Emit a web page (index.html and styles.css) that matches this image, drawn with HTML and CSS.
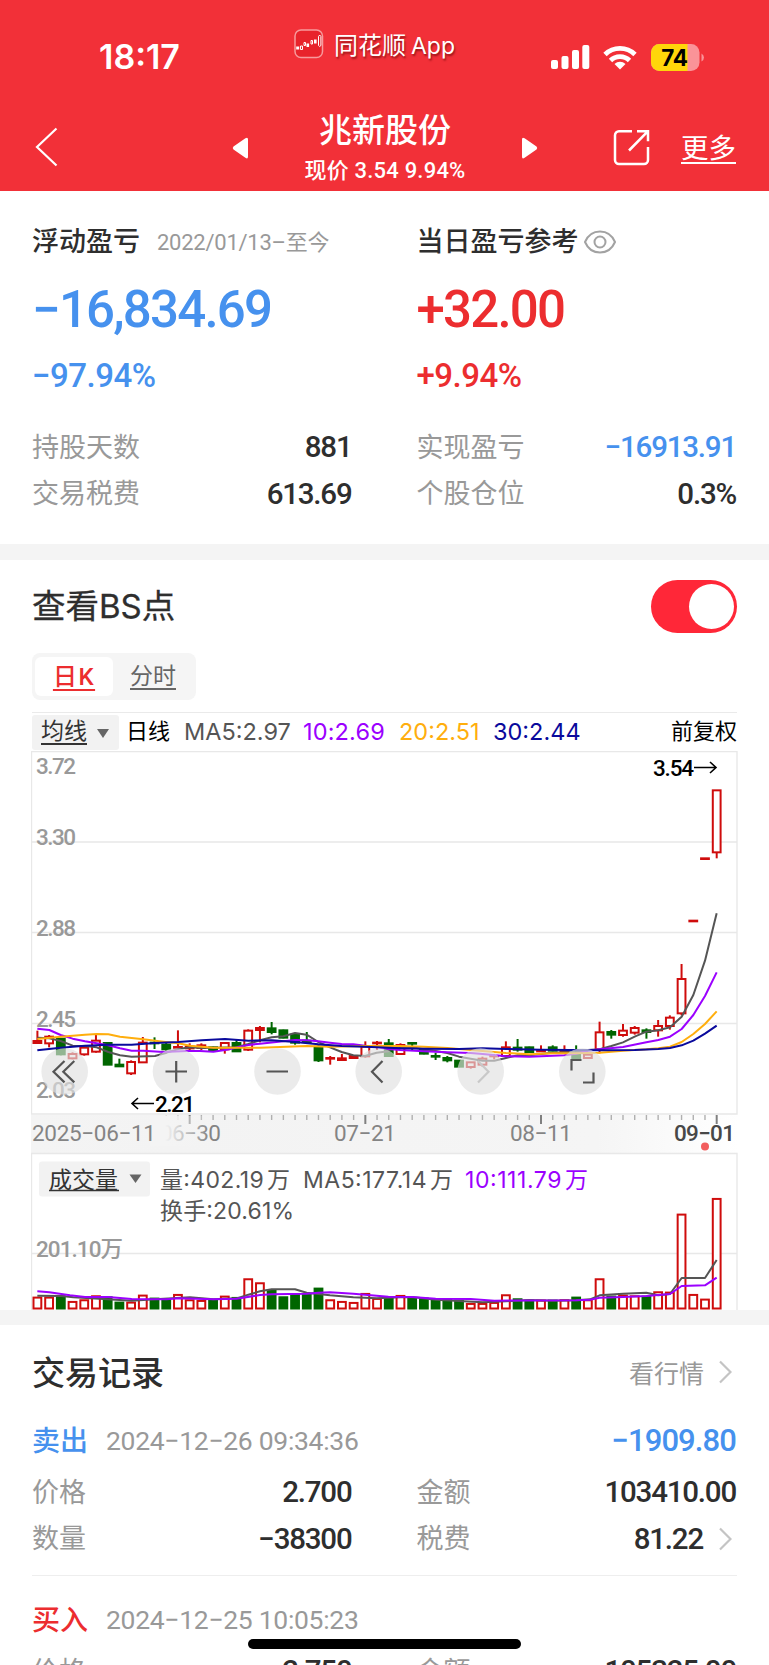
FILE: index.html
```html
<!DOCTYPE html>
<html lang="zh-CN">
<head>
<meta charset="utf-8">
<title>兆新股份</title>
<link rel="stylesheet" href="styles.css">
</head>
<body>
<div class="screen">
  <header class="top">
    <div class="status">
      <span class="clock">18:17</span>
      <span class="source">
        <svg width="30" height="30" viewBox="0 0 30 30"><rect x="1" y="1" width="27.500" height="27.500" rx="6" fill="#e8232b" stroke="#f79a9c" stroke-width="1.500"/><path d="M2.200 17.500h3v3h-3zM12.500 14.500h2.600v3.500h-2.600zM20 10.500h2.600v4h-2.600z" fill="#fff"/><path d="M6.500 17h2v3.500h-2zM10 13.500h1.500v3h-1.500zM17 11.500h1.500v3.500h-1.500zM24.500 7.500q1.200-3 2.400 0v9q-1.200 2-2.400 0z" fill="none" stroke="#fff"/></svg>
        <span class="source-name">同花顺<span class="latin">App</span></span>
      </span>
      <span class="radios">
        <svg width="150" height="28" viewBox="551 44 150 28">
          <g fill="#fff"><rect x="551" y="60" width="7" height="9" rx="2"/><rect x="561.500" y="56" width="7" height="13" rx="2"/><rect x="572" y="50" width="7" height="19" rx="2"/><rect x="582.300" y="45" width="7" height="24" rx="2"/></g>
          <g fill="none" stroke="#fff" stroke-width="4.800"><path d="M605 54.500a21.500 21.500 0 0 1 30 0"/><path d="M610.500 60.500a13.500 13.500 0 0 1 19 0"/></g>
          <path d="M620 69.500l-5.500-5.500a8 8 0 0 1 11 0z" fill="#fff"/>
          <rect x="651" y="44" width="48.500" height="27" rx="8.500" fill="#fa9398"/>
          <path d="M659.500 44h28v27h-28a8.500 8.500 0 0 1-8.500-8.500v-10a8.500 8.500 0 0 1 8.500-8.500z" fill="#ffd60a"/>
          <path d="M701.500 53.500a4.500 4.500 0 0 1 0 8z" fill="#fa9398"/>
          <text x="674.500" y="65.500" class="battery">74</text>
        </svg>
      </span>
    </div>
    <nav class="nav">
      <svg class="back" width="24" height="40" viewBox="0 0 24 40"><path d="M21.500 1.500L2 20l19.500 18.500" fill="none" stroke="#fff" stroke-width="2.200"/></svg>
      <svg class="prev" width="17" height="24" viewBox="0 0 17 24"><path d="M16 3.500v17q0 3-2.600 1.200L1.500 13.500q-1.500-1.500 0-3L13.400 2.300Q16 .5 16 3.500z" fill="#fff"/></svg>
      <div class="stock"><h1>兆新股份</h1><p>现价 3.54 9.94%</p></div>
      <svg class="next" width="17" height="24" viewBox="0 0 17 24"><path d="M1 3.500v17q0 3 2.600 1.200L15.500 13.500q1.500-1.500 0-3L3.600 2.300Q1 .5 1 3.500z" fill="#fff"/></svg>
      <svg class="share" width="38" height="38" viewBox="0 0 38 38"><path d="M19 2.200H6a4 4 0 0 0-4 4V31a4 4 0 0 0 4 4h25a4 4 0 0 0 4-4V18M24 2.200H35v10M35 2.200L16 21.500" fill="none" stroke="#fff" stroke-width="2.500"/></svg>
      <a class="more">更多</a>
    </nav>
  </header>

  <section class="summary">
    <div class="col">
      <div class="head"><h2>浮动盈亏</h2><span class="range">2022/01/13–至今</span></div>
      <div class="big blue">−16,834.69</div>
      <div class="pct blue">−97.94%</div>
      <div class="row"><span>持股天数</span><b>881</b></div>
      <div class="row"><span>交易税费</span><b>613.69</b></div>
    </div>
    <div class="col">
      <div class="head"><h2>当日盈亏参考</h2><svg class="eye" width="34" height="26" viewBox="0 0 34 26" fill="none" stroke="#a2a2a2" stroke-width="2"><path d="M2 13C8 -1 26 -1 32 13C26 27 8 27 2 13z"/><circle cx="17" cy="13" r="5.500"/></svg></div>
      <div class="big red">+32.00</div>
      <div class="pct red">+9.94%</div>
      <div class="row"><span>实现盈亏</span><b class="blue">−16913.91</b></div>
      <div class="row"><span>个股仓位</span><b>0.3%</b></div>
    </div>
  </section>

  <section class="bs">
    <div class="bs-head"><h2>查看<span class="latin">BS</span>点</h2><span class="toggle"><i></i></span></div>
    <div class="tabs"><span class="tab on">日K</span><span class="tab">分时</span></div>
    <div class="legend">
      <span class="pick">均线</span>
      <span class="l-name">日线</span><span class="l-5">MA5:2.97</span><span class="l-10">10:2.69</span><span class="l-20">20:2.51</span><span class="l-30">30:2.44</span>
      <span class="adj">前复权</span>
    </div>
    <svg class="chart" width="707" height="560" viewBox="31 751 707 560">
      <defs>
        <linearGradient id="axis" x1="0" y1="0" x2="1" y2="0"><stop offset="0" stop-color="#f4f4f4"/><stop offset=".2" stop-color="#f3f3f3"/><stop offset=".8" stop-color="#f5f5f5"/><stop offset="1" stop-color="#fff"/></linearGradient>
        <linearGradient id="fade" x1="0" y1="0" x2="1" y2="0"><stop offset="0" stop-color="#f4f4f4"/><stop offset=".25" stop-color="#f4f4f4"/><stop offset="1" stop-color="#f4f4f4" stop-opacity="0"/></linearGradient>
      </defs>
      <rect x="31" y="1115" width="707" height="38" fill="url(#axis)"/>
      <path class="grid" d="M31 751.500H737V1114H31.500V751.500M31.500 842H737M31.500 932.500H737M31.500 1023.500H737M31.500 1310V1153.500H737V1310M31.500 1253.500H737"/>
      <g class="scale">
        <text x="36" y="773.500" textLength="40">3.72</text>
        <text x="36" y="845" textLength="40">3.30</text>
        <text x="36" y="935.500" textLength="40">2.88</text>
        <text x="36" y="1026.500" textLength="40">2.45</text>
        <text x="36" y="1098" textLength="40">2.03</text>
        <text x="36" y="1256.500" textLength="87">201.10万</text>
      </g>
      <g id="ticks"></g>
      <g class="dates">
        <text x="160" y="1141" textLength="61">06−30</text>
        <rect x="150" y="1116" width="60" height="30" fill="url(#fade)"/>
        <text x="32" y="1141" textLength="124">2025−06−11</text>
        <text x="334" y="1141" textLength="62">07−21</text>
        <text x="510" y="1141" textLength="62">08−11</text>
        <text x="674" y="1141" textLength="61" class="today">09−01</text>
      </g>
      <g id="candles"></g>
      <g id="volumes"></g>
      <g id="lines"></g>
      <g class="mark">
        <text x="653" y="776" textLength="41">3.54</text><path d="M694 767.500h22M710 762l6 5.500-6 5.500"/>
        <text x="155" y="1112" textLength="40">2.21</text><path d="M154 1103.500h-22M138 1098l-6 5.500 6 5.500"/>
      </g>
      <circle cx="705" cy="1146.500" r="4" fill="#f25d5d"/>
      <g class="btns">
        <circle cx="64.700" cy="1071.500" r="23.300"/><circle cx="176" cy="1071.500" r="23.300"/><circle cx="277.500" cy="1071.500" r="23.300"/><circle cx="378.700" cy="1071.500" r="23.300"/><circle cx="480.700" cy="1071.500" r="23.300"/><circle cx="582.300" cy="1071.500" r="23.300"/>
      </g>
      <g class="glyphs">
        <path d="M64.500 1061L53.500 1071.700l11 10.700M74.300 1061L63.300 1071.700l11 10.700M165.500 1071.500h21.500M176.200 1061v21.500M266.500 1071.500h21.500M382.500 1061L372 1071.700l10.500 10.700M571.500 1070.500v-10.500h10M593.500 1072.500v10h-10.500"/>
        <path class="off" d="M478 1061L488.500 1071.700l-10.500 10.700"/>
      </g>
      <rect x="39" y="1161.500" width="111" height="35" rx="3" fill="#f2f2f2"/>
      <text x="49" y="1188" class="voltxt dark" textLength="69">成交量</text><path d="M49 1190.500h70" stroke="#333" stroke-width="1.500"/>
      <path d="M129.500 1174.500h12l-6 8.500z" fill="#666"/>
      <g class="voltxt">
        <text x="160" y="1188" textLength="130">量:402.19<tspan dx="3">万</tspan></text>
        <text x="303" y="1188" textLength="150">MA5:177.14<tspan dx="3">万</tspan></text>
        <text x="465" y="1188" textLength="123" fill="#9b00ff">10:111.79<tspan dx="3">万</tspan></text>
        <text x="160" y="1219" textLength="134">换手:20.61%</text>
      </g>
    </svg>
  </section>

  <section class="records">
    <div class="rec-title"><h2>交易记录</h2><span class="quote">看行情</span><svg class="chev" width="14" height="24" viewBox="0 0 14 24"><path d="M2 1.500l10.500 10.500L2 22.500"/></svg></div>
    <article class="rec">
      <div class="rec-head"><strong class="blue">卖出</strong><time>2024−12−26 09:34:36</time><b class="blue">−1909.80</b></div>
      <div class="pair"><div class="row"><span>价格</span><b>2.700</b></div><div class="row"><span>金额</span><b>103410.00</b></div></div>
      <div class="pair"><div class="row"><span>数量</span><b>−38300</b></div><div class="row"><span>税费</span><b>81.22</b><svg class="chev" width="14" height="24" viewBox="0 0 14 24"><path d="M2 1.500l10.500 10.500L2 22.500"/></svg></div></div>
    </article>
    <article class="rec second">
      <div class="rec-head"><strong class="red">买入</strong><time>2024−12−25 10:05:23</time></div>
      <div class="pair"><div class="row"><span>价格</span><b>2.750</b></div><div class="row"><span>金额</span><b>105325.00</b></div></div>
    </article>
  </section>
  <div class="home-bar"></div>
</div>
<script src="chart.js"></script>
</body>
</html>
```
FILE: styles.css
```css
* { box-sizing: border-box; }
body { margin: 0; background: #fff; color: #2e2e2e; font-family: Roboto, "Noto Sans CJK SC", sans-serif; }
h1, h2, p { margin: 0; font-weight: 500; }
.latin { font-family: Inter, sans-serif; }
.blue { color: #4691ee !important; }
.red { color: #ec2d2f !important; }
.screen { position: relative; width: 769px; height: 1665px; overflow: hidden; }

.top { height: 191px; background: #f23038; color: #fff; }
.status { display: flex; height: 104px; }
.clock { width: 195px; margin-left: 99px; padding-top: 37px; font: 600 34px/40px Inter, sans-serif; letter-spacing: 0; }
.source { display: flex; align-items: center; gap: 10px; width: 257px; height: 30px; margin-top: 29px; font-size: 24px; white-space: nowrap; text-shadow: 1px 2px 2px rgba(90,0,0,.6); }
.source-name { position: relative; top: -1px; }
.source .latin { font-size: 23px; margin-left: 5px; }
.radios { padding-top: 44px; height: 80px; }
.radios svg { display: block; overflow: visible; }
.battery { font: 700 22.500px Inter, sans-serif; text-anchor: middle; letter-spacing: -.3px; fill: #000; }
.nav { display: flex; height: 87px; }
.nav svg { flex: none; }
.back { margin: 23px 0 0 35px; }
.prev { margin: 32px 0 0 173px; }
.stock { width: 272px; text-align: center; padding-top: 4px; }
.stock h1 { font-size: 33px; line-height: 46px; }
.stock p { font-size: 22px; line-height: 33px; letter-spacing: .2px; }
.next { margin: 32px 0 0 0; }
.share { margin: 25px 0 0 75px; }
.more { margin: 25px 0 0 30px; font-size: 27.500px; line-height: 40px; text-decoration: underline; text-decoration-thickness: 2px; text-underline-offset: 4px; }

.summary { display: flex; gap: 64px; height: 353px; padding: 31px 32px 0; }
.col { flex: 1; }
.head { display: flex; align-items: center; height: 40px; }
.head h2 { font-size: 27px; line-height: 40px; }
.range { margin: -5px 0 0 17px; font-size: 22px; color: #999; letter-spacing: -.25px; white-space: nowrap; }
.eye { margin-left: 4px; }
.big { margin-top: 18px; font-size: 51px; line-height: 60px; font-weight: 500; letter-spacing: -1.800px; }
.pct { margin-top: 16px; margin-bottom: 28px; font-size: 33px; line-height: 40px; font-weight: 500; letter-spacing: -.500px; }
.row { display: flex; align-items: center; height: 46.500px; font-size: 27px; color: #999; }
.row span { margin-top: -4px; }
.row b { margin-left: auto; padding-right: 1px; color: #2e2e2e; font-size: 29.500px; font-weight: 500; letter-spacing: -1.200px; }

.bs { border-top: 16px solid #f4f4f4; padding: 0 32px; height: 766px; }
.bs-head { display: flex; justify-content: space-between; align-items: center; padding-top: 20px; }
.bs-head h2 { font-size: 33.500px; line-height: 50px; font-weight: 400; -webkit-text-stroke: .3px; }
.bs-head .latin { font-size: 33px; }
.toggle { width: 86px; height: 53px; padding: 4px 3px; border-radius: 27px; background: #ff2738; display: flex; justify-content: flex-end; }
.toggle i { width: 45px; height: 45px; border-radius: 50%; background: #fff; }
.tabs { display: flex; width: 164px; height: 47px; margin-top: 20px; padding: 4px 3px; border-radius: 8px; background: #f5f5f5; }
.tab { width: 80px; border-radius: 6px; text-align: center; font-size: 23px; line-height: 40px; color: #666; text-decoration: underline; text-underline-offset: 4px; }
.tab.on { width: 78px; background: #fff; color: #ec2d2f; font-weight: 500; font-size: 24px; letter-spacing: 1.500px; }
.legend { display: flex; align-items: center; height: 39px; margin-top: 12px; border-top: 1px solid #eaeaea; font: 23.500px/35px Inter, "Noto Sans CJK SC", sans-serif; white-space: nowrap; }
.legend span { flex: none; margin-top: -2px; }
.legend .pick { position: relative; width: 87px; height: 35px; margin-top: 0; padding-left: 9px; background: #f2f2f2; border-radius: 3px; color: #333; font-size: 23px; line-height: 33px; text-decoration: underline; text-underline-offset: 4px; }
.pick::after { content: ""; position: absolute; left: 65px; top: 14px; border: 6px solid transparent; border-top: 9px solid #666; border-bottom: 0; }
.l-name { width: 58px; padding-left: 7px; color: #000; font-size: 22px; }
.adj { color: #000; }
.l-5 { width: 126px; padding-left: 7px; color: #555; }
.l-10 { width: 96px; color: #9b00ff; letter-spacing: .15px; }
.l-20 { width: 94px; color: #ffae0d; }
.l-30 { color: #0a0a9c; }
.legend .adj { margin-left: auto; font-size: 22px; }
.chart { display: block; margin-left: -1px; }
.grid { fill: none; stroke: #e8e8e8; stroke-width: 1.400; }
.scale text { fill: #999; font-size: 22.500px; font-weight: 500; }
.dates text { fill: #848484; font-size: 22.500px; font-weight: 400; }
.dates .today { fill: #484848; font-weight: 500; }
.tick { stroke: #b0b0b0; stroke-width: 1.400; }
.tick.long { stroke: #808080; stroke-width: 2; }
.r { fill: #fff; stroke: #cf0c0c; stroke-width: 2; }
.g { fill: #060; stroke: #060; stroke-width: 2; }
.line { fill: none; stroke-width: 2; stroke-linejoin: round; }
.mark text { font-size: 22.500px; font-weight: 500; fill: #000; }
.mark path { fill: none; stroke: #000; stroke-width: 1.600; }
.btns circle { fill: rgba(225,225,225,.65); }
.glyphs path { fill: none; stroke: #555; stroke-width: 2.200; }
.glyphs .off { stroke: #c8c8c8; }
.voltxt, .voltxt text { font: 23px Inter, "Noto Sans CJK SC", sans-serif; }
.voltxt { fill: #555; }
.dark { fill: #333; }

.records { border-top: 15px solid #f4f4f4; }
.rec-title { display: flex; align-items: center; height: 94px; padding: 0 37px 0 32px; }
.rec-title h2 { font-size: 33px; margin-top: -3px; }
.quote { margin: -1px 0 0 auto; font-size: 25px; color: #999; }
.chev { margin-left: 14px; fill: none; stroke: #c4c4c4; stroke-width: 2.200; }
.rec { margin: 0 32px; }
.rec-head { display: flex; align-items: center; height: 42px; margin-bottom: 8px; }
.rec-head strong { width: 74px; margin-top: -2px; font-size: 28px; font-weight: 500; }
.rec-head time { font-size: 26.500px; color: #999; letter-spacing: -.300px; }
.rec-head b { margin-left: auto; padding-right: 1px; font-size: 31px; font-weight: 500; letter-spacing: -.900px; }
.pair { display: flex; gap: 64px; }
.pair .row { flex: 1; }
.rec .chev { margin-right: 5px; }
.second { border-top: 1px solid #eee; margin-top: 13px; padding-top: 22px; }
.home-bar { position: absolute; left: 248px; top: 1639px; width: 273px; height: 10px; border-radius: 5px; background: #000; }
```
FILE: chart.js
```js
// Candle: [colour, body top, body bottom, high, low], thirds of a pixel below BASE.
const BASE = 960, VOL = 1140, STEP = 11.712, X0 = 37.4;
const candles = [
["r",243,249,212,250],["r",230,250,225,262],["g",236,283,234,286],["r",282,295,277,298],["r",263,283,263,287],
["r",242,275,225,278],["g",249,314,249,314],["g",314,319,296,321],["r",306,340,301,345],["r",248,307,231,307],
["g",248,250,232,267],["g",254,268,247,272],["r",261,264,211,267],["r",260,265,250,270],["r",256,264,250,270],
["g",262,270,260,272],["r",249,268,246,281],["g",249,274,237,276],["r",212,269,208,273],["r",204,210,198,247],
["g",205,216,186,223],["g",211,233,209,235],["g",224,248,222,254],["g",242,246,216,250],["g",260,301,256,306],
["r",294,296,288,314],["r",295,300,282,301],["r",288,294,286,295],["r",260,289,244,293],["r",248,250,243,270],
["g",250,288,237,290],["r",255,282,250,283],["g",249,251,247,270],["g",267,281,265,283],["g",288,290,278,300],
["g",294,301,288,307],["g",302,320,300,322],["r",307,321,307,326],["r",296,314,290,320],["r",288,289,282,298],
["r",262,288,244,292],["g",263,269,237,275],["g",262,276,260,278],["r",272,274,256,275],["g",262,272,256,274],
["r",272,274,256,276],["g",277,296,256,298],["r",284,294,283,295],["r",217,268,185,280],["g",216,224,210,236],
["r",212,225,192,230],["r",204,218,198,224],["g",211,216,205,236],["r",198,211,180,230],["r",173,198,166,209],
["r",57,160,12,166],["r",-118,-116,-118,-116],["r",-305,-303,-305,-303],["r",-509,-323,-509,-305]];
const volumes = [471,471,467,484,479,467,470,486,486,465,474,478,463,479,481,478,468,472,416,428,450,470,462,463,444,479,484,487,460,475,472,466,475,474,480,476,480,490,490,487,464,476,480,480,480,479,471,479,416,468,465,467,468,455,456,222,463,477,175];
// Series: left part measured from x=20, right part from x=390.
const series = [
["#555",BASE,"52,233 88,235 122,243 158,257 195,258 230,262 265,276 300,286 335,290 405,288 440,278 475,267 510,262 545,264 650,262 685,252 720,241 755,232 790,229 825,219 860,224 895,246 930,262 965,276 1000,286 1035,288 1070,278 1105,274","0,268 31,264 66,262 101,268 137,273 172,279 207,290 242,296 278,302 313,302 348,294 383,286 418,286 453,282 488,278 523,277 559,276 594,270 629,268 664,258 699,247 734,230 769,215 805,211 840,202 875,170 910,105 945,2 980,-140"],
["#9b00ff",BASE,"52,206 88,210 122,225 158,236 195,244 230,250 265,256 300,265 335,272 370,272 430,276 500,273 540,273 580,275 620,269 685,255 720,251 790,244 825,240 860,241 895,244 930,248 965,252 1000,253 1070,262 1105,267","31,270 101,274 172,277 242,279 278,282 348,289 418,290 488,287 523,286 559,281 594,272 629,268 699,261 769,247 805,240 840,230 875,207 910,165 945,108 980,37"],
["#ffae0d",BASE,"52,237 122,230 195,224 230,222 265,223 300,230 370,238 430,245 475,250 510,257 580,263 720,263 860,258 930,260 1035,258 1105,258","31,258 101,260 172,264 242,270 313,276 348,279 418,283 488,280 559,280 629,278 699,272 769,268 805,265 840,260 875,246 910,222 945,192 980,154"],
["#0a0a9c",BASE,"52,271 122,263 195,257 265,254 335,254 405,249 475,246 545,241 615,237 685,242 755,241 825,246 895,253 965,258 1035,260 1105,263","31,265 101,266 207,267 278,265 348,267 453,269 629,271 734,270 805,267 840,264 875,256 910,242 945,221 980,197"],
["#555",VOL,"52,467 125,468 160,472 250,477 335,482 405,478 510,472 580,478 650,475 685,464 720,454 755,448 825,448 860,458 930,466 1000,472 1070,475","31,472 66,471 137,479 207,483 278,487 348,484 418,480 488,482 559,481 600,478 629,466 699,461 769,458 805,466 840,462 875,414 945,414 980,360"],
["#9b00ff",VOL,"52,454 88,457 150,466 195,471 265,471 335,477 440,478 475,475 580,478 650,476 720,465 755,463 860,461 895,458 930,457 1000,461 1035,464 1105,470","66,471 137,476 242,477 313,482 559,481 600,479 629,473 699,471 769,468 805,465 840,462 875,438 945,436 980,413"]];
const NS = "http://www.w3.org/2000/svg";
function add(parent, tag, attrs) {
  const el = document.createElementNS(NS, tag);
  for (const k in attrs) el.setAttribute(k, attrs[k]);
  document.getElementById(parent).appendChild(el);
}
candles.forEach(([c, t, b, h, l], i) => {
  const x = X0 + i * STEP, y = v => BASE + v / 3;
  add("candles", "path", { class: c, d: `M${x} ${y(h)}V${y(l)}` });
  add("candles", "rect", { class: c, x: x - 3.9, y: y(t), width: 7.8, height: (b - t) / 3 });
  const top = VOL + volumes[i] / 3 + .6;
  add("volumes", "rect", { class: c, x: x - 3.9, y: top, width: 7.8, height: 1308.5 - top });
  if (i > 10) {
    const long = i % 15 === 13;
    add("ticks", "path", { class: long ? "tick long" : "tick", d: `M${x} 1115v${long ? 9 : 5}`, opacity: i === 11 ? .3 : i === 12 ? .6 : 1 });
  }
});
series.forEach(([colour, base, left, right]) => {
  const map = (s, ox) => s.split(" ").map(p => { const [x, y] = p.split(","); return `${ox + x / 3},${base + y / 3}`; }).join(" ");
  add("lines", "polyline", { class: "line", stroke: colour, points: map(left, 20) + " " + map(right, 390) });
});
```
